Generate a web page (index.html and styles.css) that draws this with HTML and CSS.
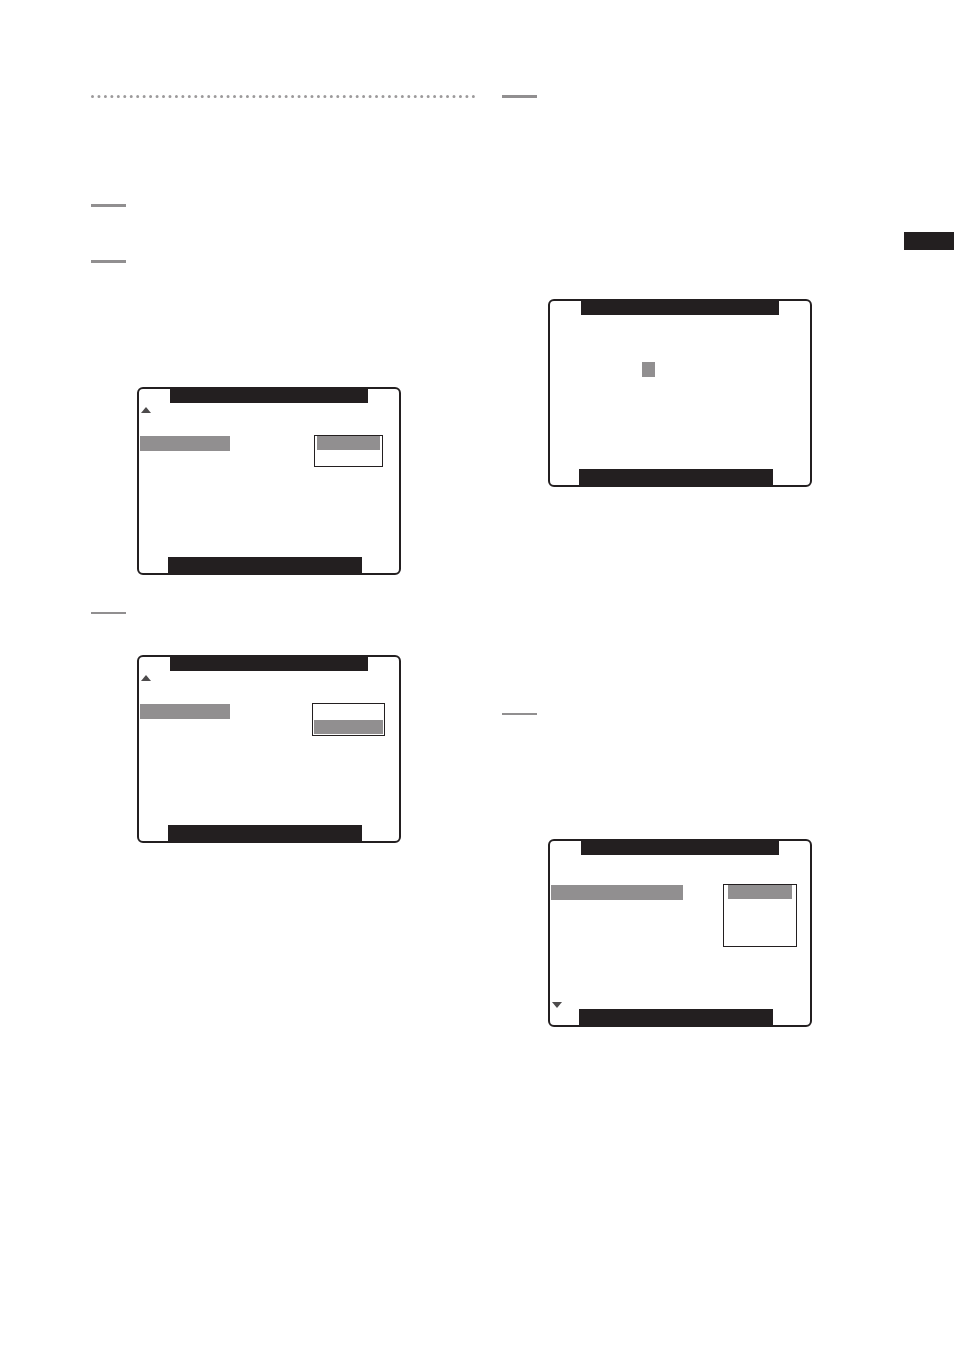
FILE: index.html
```html
<!DOCTYPE html>
<html lang="en">
<head>
  <meta charset="UTF-8">
  <meta name="viewport" content="width=device-width, initial-scale=1.0">
  <title>Camera menu</title>
  <link rel="stylesheet" href="styles.css">
</head>
<body>
  <div class="page">
    <main class="columns">
      <div class="column">
        <section class="intro">
          <svg class="dots" viewBox="0 0 384 3" aria-hidden="true">
            <line x1="1.5" y1="1.5" x2="383" y2="1.5" pathLength="591"/>
          </svg>
        </section>

        <section class="step step-short">
          <div class="step-rule"></div>
        </section>

        <section class="step step-select">
          <div class="step-rule"></div>
          <div class="screen">
            <div class="screen-title"></div>
            <div class="screen-body">
              <svg class="arrow arrow-up" viewBox="0 0 10 6" aria-hidden="true"><path d="M5 0L10 6H0z"/></svg>
              <div class="menu-row">
                <div class="menu-item"></div>
                <div class="options options-narrow">
                  <div class="option selected"></div>
                  <div class="option-gap"></div>
                </div>
              </div>
            </div>
            <div class="screen-footer"></div>
          </div>
        </section>

        <section class="step step-confirm">
          <div class="step-rule thin"></div>
          <div class="screen">
            <div class="screen-title"></div>
            <div class="screen-body">
              <svg class="arrow arrow-up" viewBox="0 0 10 6" aria-hidden="true"><path d="M5 0L10 6H0z"/></svg>
              <div class="menu-row">
                <div class="menu-item"></div>
                <div class="options">
                  <div class="option-gap"></div>
                  <div class="option selected"></div>
                </div>
              </div>
            </div>
            <div class="screen-footer"></div>
          </div>
        </section>
      </div>

      <div class="column">
        <section class="step step-input">
          <div class="step-rule"></div>
          <div class="screen">
            <div class="screen-title"></div>
            <div class="screen-body">
              <div class="cursor"></div>
            </div>
            <div class="screen-footer"></div>
          </div>
        </section>

        <section class="step step-list">
          <div class="step-rule thin"></div>
          <div class="screen">
            <div class="screen-title"></div>
            <div class="screen-body">
              <div class="menu-row first-row">
                <div class="menu-item wide"></div>
                <div class="options options-tall">
                  <div class="option selected"></div>
                </div>
              </div>
              <svg class="arrow arrow-down" viewBox="0 0 10 6" aria-hidden="true"><path d="M0 0H10L5 6z"/></svg>
            </div>
            <div class="screen-footer"></div>
          </div>
        </section>
      </div>
    </main>

    <aside class="page-side">
      <div class="page-tab"></div>
    </aside>
  </div>
</body>
</html>
```
FILE: styles.css
```css
* {
  box-sizing: border-box;
}

body {
  margin: 0;
  background-color: #fff;
  color: #231f20;
  font-family: "Liberation Sans", Arial, sans-serif;
}

.page {
  display: flex;
  min-height: 100vh;
}

.columns {
  flex: 1;
  display: grid;
  grid-template-columns: 1fr 1fr;
  gap: 27px;
  padding: 95px 0 95px 91px;
}

.page-side {
  width: 68px;
  padding: 232px 0 0 18px;
}

.page-tab {
  height: 18px;
  background-color: #231f20;
}

/* steps */
.intro {
  min-height: 109px;
}

.dots {
  display: block;
  width: 100%;
}

.dots line {
  stroke: #9c9a9b;
  stroke-width: 3;
  stroke-linecap: round;
  stroke-dasharray: 0 10;
}

.step {
  display: flex;
  flex-direction: column;
}

.step-rule {
  width: 35px;
  height: 3px;
  background-color: #918f90;
}

.step-rule.thin {
  height: 2px;
}

.step-short {
  min-height: 56px;
}

.step-select {
  gap: 124px;
  padding-bottom: 37px;
}

.step-confirm {
  gap: 41px;
}

.step-input {
  gap: 201px;
  padding-bottom: 226px;
}

.step-list {
  gap: 124px;
}

/* camera screens */
.screen {
  display: flex;
  flex-direction: column;
  width: 264px;
  min-height: 188px;
  margin-left: 46px;
  border: 2px solid #231f20;
  border-radius: 6px;
}

.screen-title {
  width: 198px;
  height: 14px;
  margin-left: 31px;
  background-color: #231f20;
}

.screen-body {
  flex: 1;
  display: flex;
  flex-direction: column;
  padding: 4px 13px 1px 1px;
}

.screen-footer {
  width: 194px;
  height: 16px;
  margin-left: 29px;
  background-color: #231f20;
}

.arrow {
  width: 10px;
  height: 6px;
  margin-left: 1px;
  fill: #4d4b4c;
}

.arrow-up {
  margin-bottom: 22px;
}

.arrow-down {
  margin-top: auto;
}

.menu-row {
  display: flex;
  justify-content: space-between;
  align-items: flex-start;
}

.first-row {
  margin-top: 25px;
}

.menu-item {
  width: 90px;
  height: 15px;
  margin-top: 1px;
  background-color: #918f90;
}

.menu-item.wide {
  width: 132px;
}

.options {
  width: 73px;
  min-height: 33px;
  margin-right: 1px;
  padding: 0 1px;
  border: 1px solid #231f20;
}

.options-narrow {
  width: 69px;
  min-height: 32px;
  margin-right: 3px;
  padding: 0 2px;
}

.options-tall {
  width: 74px;
  min-height: 63px;
  margin-right: 0;
  padding: 0 4px;
}

.option {
  height: 14px;
}

.option-gap {
  height: 16px;
}

.selected {
  background-color: #918f90;
}

.cursor {
  width: 13px;
  height: 15px;
  margin: 43px 0 0 91px;
  background-color: #918f90;
}
```
